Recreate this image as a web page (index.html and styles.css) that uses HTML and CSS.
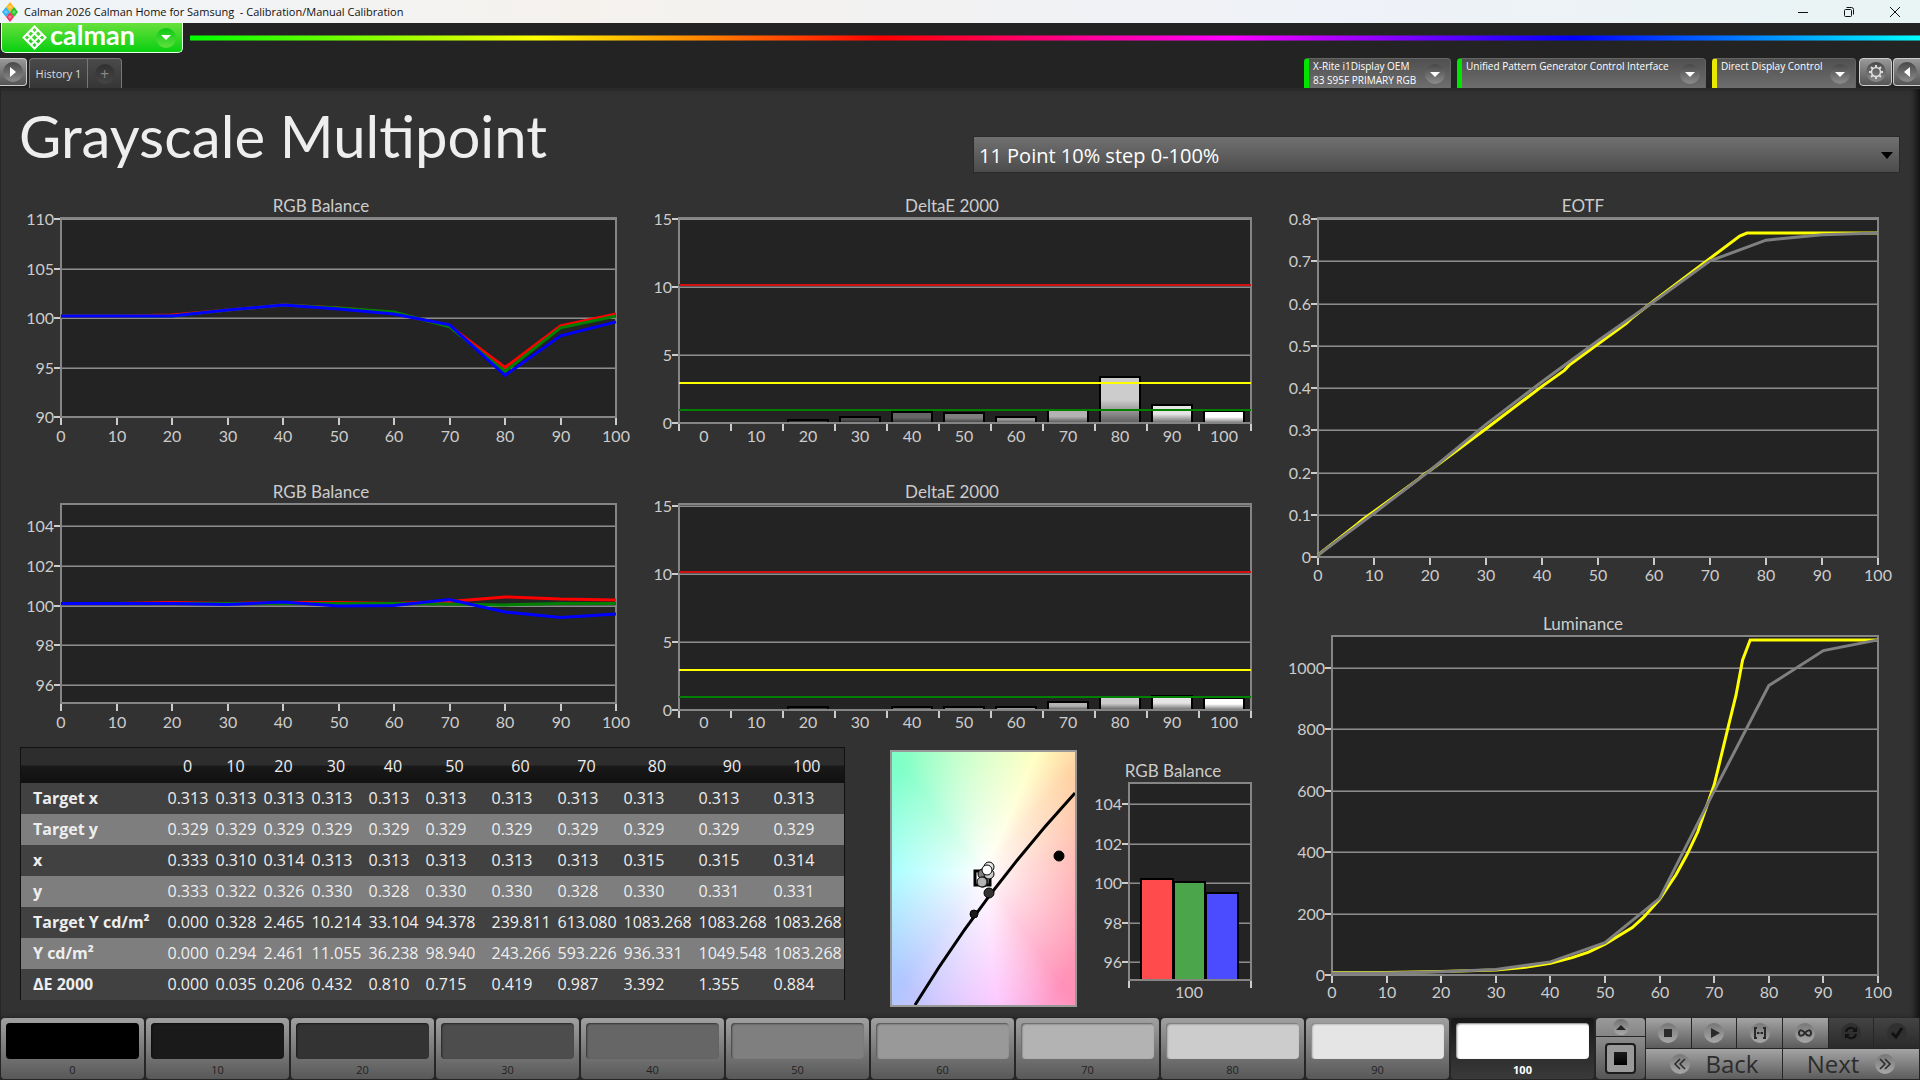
FILE: index.html
```html
<!DOCTYPE html>
<html lang="en">
<head>
  <meta charset="UTF-8">
  <title>Calman 2026 Calman Home for Samsung - Calibration/Manual Calibration</title>
  <link rel="stylesheet" href="styles.css">
</head>
<body>
  <div class="titlebar">
    <svg class="appicon" width="16" height="20" viewBox="0 0 16 20">
      <path d="M8 0l4 5-4 5-4-5z" fill="#ffb81c"/>
      <path d="M4 5l4 5-4 5-4-5z" fill="#2bb3f3"/>
      <path d="M12 5l4 5-4 5-4-5z" fill="#22c322"/>
      <path d="M8 10l4 5-4 5-4-5z" fill="#f5325b"/>
      <path d="M8 3l2 2-2 2-2-2zM4 8l2 2-2 2-2-2zM12 8l2 2-2 2-2-2zM8 13l2 2-2 2-2-2z" fill="#fff" opacity=".35"/>
    </svg>
    <span class="wintitle">Calman 2026 Calman Home for Samsung&nbsp; - Calibration/Manual Calibration</span>
    <div class="winbuttons">
      <button aria-label="Minimize"><svg width="12" height="12" viewBox="0 0 12 12"><path d="M1 6.5h10"/></svg></button>
      <button aria-label="Restore"><svg width="12" height="12" viewBox="0 0 12 12"><rect x="1.5" y="3.5" width="7" height="7" rx="1"/><path d="M3.5 1.5h5a2 2 0 0 1 2 2v5"/></svg></button>
      <button aria-label="Close"><svg width="12" height="12" viewBox="0 0 12 12"><path d="M1 1l10 10M11 1L1 11"/></svg></button>
    </div>
  </div>

  <header>
    <div class="brandrow">
      <button class="brand">
        <svg width="25" height="25" viewBox="0 0 25 25" fill="none" stroke="#fff" stroke-width="2">
          <path d="M12.5 1.500L23.500 12.500 12.500 23.500 1.500 12.500z"/>
          <path d="M9 5l11 11M5 9l11 11M16 5L5 16M20 9L9 20"/>
        </svg>
        <span>calman</span>
        <i class="round green"><i class="down"></i></i>
      </button>
      <div class="spectrum"></div>
    </div>
    <div class="tabrow">
      <button class="square first" aria-label="Expand"><i class="round"><i class="right"></i></i></button>
      <button class="tab">History 1</button>
      <button class="tab add" aria-label="Add tab"><i class="round dark">+</i></button>
      <div class="devices">
        <button class="device"><span>X-Rite i1Display OEM<br>83 S95F PRIMARY RGB</span><i class="round"><i class="down"></i></i></button>
        <button class="device wide"><span>Unified Pattern Generator Control Interface</span><i class="round"><i class="down"></i></i></button>
        <button class="device yellow"><span>Direct Display Control</span><i class="round"><i class="down"></i></i></button>
      </div>
      <button class="square gear" aria-label="Settings"><i class="round">
        <svg width="16" height="16" viewBox="0 0 16 16"><circle cx="8" cy="8" r="4.500" fill="none" stroke="#ddd" stroke-width="1.500"/><path d="M8 1v3M8 12v3M1 8h3M12 8h3M3 3l2 2M11 11l2 2M13 3l-2 2M5 11l-2 2" stroke="#ddd" stroke-width="2"/></svg>
      </i></button>
      <button class="square last" aria-label="Collapse"><i class="round"><i class="left"></i></i></button>
    </div>
  </header>

  <main>
    <div class="heading">
      <h1>Grayscale Multipoint</h1>
      <div class="picker">
        <select aria-label="Points"><option>11 Point 10% step 0-100%</option></select>
      </div>
    </div>

    <div class="content">
      <div class="side">
        <div class="charts">
          <svg id="rgb1" class="chart" viewBox="0 0 620 286"></svg>
          <svg id="de1" class="chart" viewBox="0 0 640 286"></svg>
          <svg id="rgb2" class="chart" viewBox="0 0 620 260"></svg>
          <svg id="de2" class="chart" viewBox="0 0 640 260"></svg>
        </div>
        <div class="lower">
          <table>
            <colgroup>
              <col class="name"><col class="s"><col class="s"><col class="s"><col class="m"><col class="m">
              <col class="l"><col class="l"><col class="l"><col class="xl"><col class="xl"><col class="xl">
            </colgroup>
            <thead>
              <tr><td></td><th>0</th><th>10</th><th>20</th><th>30</th><th>40</th><th>50</th><th>60</th><th>70</th><th>80</th><th>90</th><th>100</th></tr>
            </thead>
            <tbody>
              <tr><th>Target x</th><td>0.313</td><td>0.313</td><td>0.313</td><td>0.313</td><td>0.313</td><td>0.313</td><td>0.313</td><td>0.313</td><td>0.313</td><td>0.313</td><td>0.313</td></tr>
              <tr><th>Target y</th><td>0.329</td><td>0.329</td><td>0.329</td><td>0.329</td><td>0.329</td><td>0.329</td><td>0.329</td><td>0.329</td><td>0.329</td><td>0.329</td><td>0.329</td></tr>
              <tr><th>x</th><td>0.333</td><td>0.310</td><td>0.314</td><td>0.313</td><td>0.313</td><td>0.313</td><td>0.313</td><td>0.313</td><td>0.315</td><td>0.315</td><td>0.314</td></tr>
              <tr><th>y</th><td>0.333</td><td>0.322</td><td>0.326</td><td>0.330</td><td>0.328</td><td>0.330</td><td>0.330</td><td>0.328</td><td>0.330</td><td>0.331</td><td>0.331</td></tr>
              <tr><th>Target Y cd/m²</th><td>0.000</td><td>0.328</td><td>2.465</td><td>10.214</td><td>33.104</td><td>94.378</td><td>239.811</td><td>613.080</td><td>1083.268</td><td>1083.268</td><td>1083.268</td></tr>
              <tr><th>Y cd/m²</th><td>0.000</td><td>0.294</td><td>2.461</td><td>11.055</td><td>36.238</td><td>98.940</td><td>243.266</td><td>593.226</td><td>936.331</td><td>1049.548</td><td>1083.268</td></tr>
              <tr><th>ΔE 2000</th><td>0.000</td><td>0.035</td><td>0.206</td><td>0.432</td><td>0.810</td><td>0.715</td><td>0.419</td><td>0.987</td><td>3.392</td><td>1.355</td><td>0.884</td></tr>
            </tbody>
          </table>
          <div class="cie">
            <svg viewBox="0 0 183 253">
              <path d="M23 253Q92 140 183 41" fill="none" stroke="#000" stroke-width="3"/>
              <rect x="83" y="119" width="15" height="14" fill="#fff" stroke="#000" stroke-width="3"/>
              <g stroke="#000" stroke-width="1">
                <circle cx="167" cy="104" r="5" fill="#000"/>
                <circle cx="82" cy="162" r="4" fill="#1a1a1a"/>
                <circle cx="97" cy="141" r="5" fill="#333"/>
                <circle cx="91" cy="122" r="5" fill="#808080"/>
                <circle cx="91" cy="130" r="5" fill="#999"/>
                <circle cx="90" cy="130" r="5" fill="#b3b3b3"/>
                <circle cx="97" cy="122" r="5" fill="#ccc"/>
                <circle cx="97" cy="115" r="5" fill="#e6e6e6"/>
                <circle cx="95" cy="118" r="5" fill="#fff"/>
              </g>
            </svg>
          </div>
          <svg id="rgb3" class="chart" viewBox="0 0 200 262"></svg>
        </div>
      </div>
      <div class="side">
        <svg id="eotf" class="chart" viewBox="0 0 620 410"></svg>
        <svg id="lum" class="chart" viewBox="0 0 620 404"></svg>
      </div>
    </div>
  </main>

  <footer>
    <div class="swatches" id="swatches"></div>
    <div class="pattern">
      <button class="up" aria-label="More"><i class="round"><i class="upward"></i></i></button>
      <button class="window" aria-label="Pattern window"><span></span></button>
    </div>
    <div class="controls">
      <button aria-label="Stop"><i class="round"><svg viewBox="0 0 20 20"><path d="M6 6h8v8H6z"/></svg></i></button>
      <button aria-label="Play"><i class="round"><svg viewBox="0 0 20 20"><path d="M7 5l9 5-9 5z"/></svg></i></button>
      <button aria-label="Read series"><i class="round"><svg viewBox="0 0 20 20"><path d="M7 5H5v10h2M13 5h2v10h-2" fill="none" stroke="#2a2a2a" stroke-width="2"/><path d="M7 9h2v2H7zM9.500 9h1v2h-1zM11 9h2v2h-2z"/></svg></i></button>
      <button aria-label="Read continuous"><i class="round"><svg viewBox="0 0 20 20"><path d="M10 10C8 7 4 6 4 10s4 3 6 0 6-4 6 0-4 3-6 0z" fill="none" stroke="#2a2a2a" stroke-width="2"/></svg></i></button>
      <button class="off" aria-label="Refresh"><i class="round"><svg viewBox="0 0 20 20"><path d="M5 9a5 5 0 0 1 9-2M15 11a5 5 0 0 1-9 2" fill="none" stroke="#111" stroke-width="2"/><path d="M16 4v5h-5zM4 16v-5h5z"/></svg></i></button>
      <button class="off" aria-label="Accept"><i class="round"><svg viewBox="0 0 20 20"><path d="M5 10l4 4 6-9" fill="none" stroke="#111" stroke-width="3"/></svg></i></button>
      <button class="nav"><i class="round"><svg viewBox="0 0 20 20"><path d="M10 5l-5 5 5 5M15 5l-5 5 5 5" fill="none" stroke="#2a2a2a" stroke-width="1.500"/></svg></i>Back</button>
      <button class="nav">Next<i class="round"><svg viewBox="0 0 20 20"><path d="M5 5l5 5-5 5M10 5l5 5-5 5" fill="none" stroke="#2a2a2a" stroke-width="1.500"/></svg></i></button>
    </div>
  </footer>

  <script src="charts.js"></script>
</body>
</html>
```
FILE: styles.css
```css
* { box-sizing: border-box; }
body { margin: 0; min-height: 100vh; display: flex; flex-direction: column; background: #323232; color: #eee; font-family: "Open Sans", "Noto Sans", sans-serif; }
button { margin: 0; padding: 0; border: 0; background: none; color: inherit; font: inherit; }
svg { display: block; }

/* window frame */
.titlebar { height: 23px; display: flex; align-items: center; padding-left: 2px; background: linear-gradient(90deg, #eff4f9, #f5f2ee 30%, #eff2f8 70%, #e9f4f4); color: #111; }
.wintitle { margin-left: 6px; font-size: 11px; line-height: 20px; }
.winbuttons { margin-left: auto; margin-right: 2px; display: flex; }
.winbuttons button { width: 46px; height: 20px; display: flex; align-items: center; justify-content: center; }
.winbuttons svg { fill: none; stroke: #111; }

/* top bar */
header { background: #232323; height: 66px; border-bottom: 1px solid #2b2b2b; }
.brandrow { display: flex; height: 35px; }
.brand { width: 182px; height: 30px; margin-left: 1px; display: flex; align-items: center; padding: 0 6px 0 20px; border: 1px solid #e8ffe8; border-top: 0; border-radius: 0 0 5px 5px; background: linear-gradient(#68e03c, #08cf10); color: #fff; }
.brand span { margin-left: 3px; font: bold 27px/24px Lato, sans-serif; padding-bottom: 6px; }
.spectrum { flex: 1; height: 6px; margin: 12px 0 0 7px; background: linear-gradient(90deg, #0f0, #ff0, #f00, #f0f, #00f, #0ff); border: solid rgba(40, 40, 40, .5); border-width: 1px 0; }
.tabrow { display: flex; height: 30px; }
.square { width: 33px; height: 28px; display: flex; align-items: center; justify-content: center; border: 1px solid #ccc; border-radius: 4px; background: linear-gradient(#999, #555); }
.square.first { width: 27px; border-left: 0; border-radius: 0 4px 4px 0; margin-right: 2px; }
.square.last { width: 27px; border-right: 0; border-radius: 4px 0 0 4px; margin-left: 1px; }
.tab { width: 59px; border: 1px solid #777; border-bottom: 0; border-radius: 4px 0 0 0; background: linear-gradient(#4a4a4a, #363636); color: #ddd; font-size: 11px; }
.tab.add { width: 34px; border-left: 0; border-radius: 0 4px 0 0; display: flex; align-items: center; justify-content: center; }
.round { width: 20px; height: 20px; flex: none; border-radius: 50%; display: flex; align-items: center; justify-content: center; background: linear-gradient(#484848, #8c8c8c); font-style: normal; }
.round.green { margin-left: auto; background: linear-gradient(#0ac814, #60e040); }
.round.dark { background: linear-gradient(#303030, #454545); color: #888; font-size: 16px; }
.down, .upward { border: 5px solid transparent; border-top: 5px solid #fff; border-bottom: 0; }
.upward { border-top: 0; border-bottom: 5px solid #222; }
.right, .left { border: 5px solid transparent; border-left: 6px solid #fff; border-right: 0; }
.left { border-left: 0; border-right: 6px solid #fff; }
.devices { margin-left: auto; display: flex; gap: 6px; }
.device { width: 147px; display: flex; padding: 0 5px 0 4px; border: 1px solid #666; border-left: 5px solid #00e400; border-bottom: 0; border-radius: 4px 4px 0 0; background: linear-gradient(#505050, #6e6e6e); color: #fff; font-size: 10px; line-height: 14px; text-align: left; }
.device.wide { width: 249px; }
.device.yellow { width: 144px; border-left-color: #e8e800; }
.device .round { margin: 5px 0 0 auto; }
.gear { margin-left: 3px; }

/* page */
main { flex: 1; padding: 0 20px; border-left: 1px solid #262626; box-shadow: inset -6px 0 6px -2px #111; }
.heading { display: flex; justify-content: space-between; height: 107px; margin-left: -2px; }
h1 { margin: 13px 0 0; font: 58px/68px Lato, sans-serif; }
.picker { position: relative; width: 50%; max-width: 927px; height: 37px; margin-top: 47px; }
.picker select { width: 100%; height: 100%; appearance: none; padding: 2px 5px 0; border: 1px solid #2a2a2a; border-radius: 0; background: linear-gradient(#707070, #4c4c4c); color: #fff; font: 20px "Open Sans", sans-serif; }
.picker::after { content: ""; position: absolute; right: 7px; top: 16px; border: 6px solid transparent; border-top: 7px solid #000; border-bottom: 0; pointer-events: none; }
.content { display: grid; grid-template-columns: 1260fr 620fr; margin-left: -1px; }
.charts { display: grid; grid-template-columns: 620fr 640fr; }
.chart { width: 100%; overflow: visible; font: 16px Lato, sans-serif; fill: #ccc; }
.chart .name { font-size: 17px; }
.lower { display: grid; grid-template-columns: 870fr 190fr 200fr; margin-top: 5px; align-items: start; }
.cie { margin: 3px 3px 0 0; border: 2px solid #999;
  background: radial-gradient(ellipse at 50% 48%, #fff 0, rgba(255, 255, 255, .6) 35%, rgba(255, 255, 255, .1) 85%),
    conic-gradient(at 50% 48%, #ccffb4, #ffffb4 24deg, #ffd09a 40deg, #ffa8a0 80deg, #ff84b0 145deg, #fcb8ff 174deg, #a8c0ff 217deg, #90ffff 272deg, #70ffc0 323deg, #ccffb4); }
.cie svg { width: 100%; }

table { table-layout: fixed; border-collapse: collapse; margin-right: 45px; border: 1px solid #111; border-bottom: 0; font-size: 16px; }
col.name { width: 143px; }
col.s { width: 48px; }
col.m { width: 57px; }
col.l { width: 66px; }
col.xl { width: 75px; }
th, td { padding: 0 0 0 4px; height: 31px; line-height: 31px; text-align: left; white-space: nowrap; }
thead tr { background: linear-gradient(#2d2d2d 48%, #191919 52%, #101010); }
thead th, thead td { height: 35px; padding: 2px 0 0; text-align: center; font-weight: normal; }
tbody th { padding-left: 12px; font-size: 16px; }
tbody tr { background: #414141; }
tbody tr:nth-child(even) { background: #7e7e7e; }

/* bottom bar */
footer { display: flex; height: 62px; padding: 0 1px; background: #262626; }
.swatches { flex: 1; display: flex; gap: 2px; }
.swatch { flex: 1; height: 61px; padding: 5px; border-radius: 4px; background: linear-gradient(#a0a0a0, #585858); color: #222; font-size: 11px; line-height: 22px; text-align: center; }
.swatch i { display: block; height: 36px; border-radius: 4px; box-shadow: inset 1px 1px 2px rgba(0, 0, 0, .5); }
.swatch.active { background: linear-gradient(#181818, #3a3a3a); color: #fff; font-weight: bold; }
.pattern { width: 49px; margin: 0 1px 0 2px; display: flex; flex-direction: column; gap: 1px; }
.pattern button { display: flex; align-items: center; justify-content: center; background: linear-gradient(#9a9a9a, #858585); border-radius: 4px 4px 0 0; }
.pattern .up { height: 18px; }
.pattern .round { width: 16px; height: 16px; background: linear-gradient(#707070, #aaa); }
.pattern .window { height: 42px; border-radius: 0 0 4px 4px; background: linear-gradient(#8c8c8c, #555); }
.window span { width: 31px; height: 31px; border: 2px solid #1c1c1c; border-radius: 4px; padding: 7px; background: linear-gradient(#1c1c1c, #000) content-box, #999; }
.controls { width: 273px; display: grid; grid-template-columns: repeat(6, 1fr); grid-template-rows: 30px 30px; gap: 1px; }
.controls button { display: flex; align-items: center; justify-content: center; background: linear-gradient(#a4a4a4, #5c5c5c); color: #2c2c2c; }
.controls .off { background: linear-gradient(#444, #2a2a2a); }
.controls .round { background: linear-gradient(#777, #a8a8a8); }
.controls .off .round { background: #303030; }
.controls svg { width: 20px; fill: #2a2a2a; }
.controls .off svg { fill: #111; }
.controls .nav { grid-column: span 3; gap: 16px; font-size: 24px; line-height: 28px; }
```
FILE: charts.js
```js
const tens = [0, 10, 20, 30, 40, 50, 60, 70, 80, 90, 100];
const greys = tens.map(t => Math.round(t * 2.55));

function rect(x, y, w, h, fill) {
  return `<rect x="${x}" y="${y}" width="${w}" height="${h}" fill="${fill}"/>`;
}

function text(x, y, anchor, s) {
  return `<text x="${x}" y="${y}" text-anchor="${anchor}">${s}</text>`;
}

// o: box [left, top, right, bottom], title [x, y, text], y axis as
// [value, pixel] pairs, labelY = baseline of the x labels
function chart(id, o) {
  const [l, t, r, b] = o.box;
  const [[v0, p0], [v1, p1]] = o.scale;
  const py = v => p0 + (v - v0) * (p1 - p0) / (v1 - v0);
  const px = v => l + v * (r - l) / 100;
  let s = rect(l, t, r - l, b - t, "#232323");

  o.grid.forEach(v => {
    const y = Math.round(py(v));
    s += rect(l, y - 1, r - l, 1, "#5c5c5c") + rect(l, y, r - l, 1, "#8c8c8c");
    s += rect(l - 7, y - 1, 7, 2, "#ccc") + text(l - 7, y + 6, "end", v);
  });

  const labels = o.labels || tens;
  const slot = (r - l) / labels.length;
  labels.forEach((v, i) => {
    const x = o.bars ? l + slot * (i + .5) - 1 : px(v);
    s += text(Math.round(x), o.labelY, "middle", v);
    if (!o.bars) s += rect(Math.round(x) - 1, b, 2, 8, "#ccc");
  });
  if (o.bars) {
    for (let i = 0; i <= labels.length; i++) s += rect(Math.round(l + slot * i) - 1, b, 2, 8, "#ccc");
  }

  (o.barList || []).forEach(k => {
    const y = Math.round(py(k.v));
    if (b - y > 1) s += `<rect x="${k.x}" y="${y}" width="${k.w}" height="${b - y}" fill="${k.fill}" stroke="#000" stroke-width="2"/>`;
  });
  s += `<rect x="${l}" y="${t}" width="${r - l}" height="${b - t}" fill="none" stroke="#858585" stroke-width="2"/>`;
  (o.limits || []).forEach(([v, c]) => s += rect(l, Math.round(py(v)), r - l, 2, c));
  s = `<g shape-rendering="crispEdges">${s}</g>`;

  // the plotted lines sit 2px above the grid
  (o.lines || []).forEach(([c, pts]) => {
    const d = pts.map(([x, y]) => px(x).toFixed(1) + "," + (py(y) - 2).toFixed(1)).join(" ");
    s += `<polyline points="${d}" fill="none" stroke="${c}" stroke-width="3"/>`;
  });
  s += `<text class="name" x="${o.title[0]}" y="${o.title[1]}" text-anchor="middle">${o.title[2]}</text>`;
  document.getElementById(id).innerHTML = s;
}

const zip = ys => ys.map((y, i) => [i * 10, y]);

// grey ramps for the deltaE bars
const defs = greys.map((g, i) => {
  const lo = Math.round(g * .45);
  return `<linearGradient id="g${i}" x1="0" y1="0" x2="0" y2="1"><stop offset="0" stop-color="rgb(${g},${g},${g})"/><stop offset=".5" stop-color="rgb(${g},${g},${g})"/><stop offset="1" stop-color="rgb(${lo},${lo},${lo})"/></linearGradient>`;
}).join("");
document.body.insertAdjacentHTML("beforeend", `<svg width="0" height="0" style="position:absolute"><defs>${defs}</defs></svg>`);

function deltaBars(values) {
  return values.map((v, i) => ({ v, x: 44 + i * 52, w: 40, fill: `url(#g${i})` })).filter(k => k.v > .1);
}
const limits = [[10.2, "#d01010"], [3, "#ff0"], [1, "#008000"]];

chart("rgb1", {
  box: [41, 22, 596, 221], title: [301, 16, "RGB Balance"], labelY: 246,
  scale: [[90, 221], [110, 23]], grid: [90, 95, 100, 105, 110],
  lines: [
    ["#f00", zip([100, 100, 100.1, 100.6, 101.1, 100.8, 100.3, 99, 94.800, 99, 100.2])],
    ["#008000", zip([100, 100, 100, 100.6, 101.1, 100.8, 100.4, 98.900, 94.400, 98.800, 100])],
    ["#00f", zip([100, 100, 100, 100.6, 101.1, 100.7, 100.2, 99.100, 94, 98, 99.400])]
  ]
});
chart("rgb2", {
  box: [41, 22, 596, 221], title: [301, 16, "RGB Balance"], labelY: 246,
  scale: [[96, 203], [104, 44]], grid: [96, 98, 100, 102, 104],
  lines: [
    ["#f00", zip([100, 100, 100.05, 100, 100.05, 100.05, 100, 100.1, 100.33, 100.22, 100.18])],
    ["#008000", zip([100, 100, 100, 100, 100, 100, 100, 99.980, 99.930, 100, 100])],
    ["#00f", zip([100, 100, 100, 99.950, 100.08, 99.880, 99.900, 100.2, 99.570, 99.300, 99.470])]
  ]
});
chart("de1", {
  box: [39, 22, 611, 227], title: [312, 16, "DeltaE 2000"], labelY: 246, bars: true,
  scale: [[0, 227], [15, 23]], grid: [0, 5, 10, 15], limits,
  barList: deltaBars([0, .035, .206, .432, .81, .715, .419, .987, 3.392, 1.355, .884])
});
chart("de2", {
  box: [39, 22, 611, 228], title: [312, 16, "DeltaE 2000"], labelY: 246, bars: true,
  scale: [[0, 228], [15, 24]], grid: [0, 5, 10, 15], limits,
  barList: deltaBars([0, 0, .2, .05, .2, .2, .2, .6, .95, 1.05, .85])
});
chart("rgb3", {
  box: [49, 36, 171, 233], title: [93, 30, "RGB Balance"], labelY: 251, bars: true, labels: [100],
  scale: [[96, 215], [104, 57]], grid: [96, 98, 100, 102, 104],
  barList: [
    { v: 100.2, x: 61, w: 32, fill: "#ff4b4b" },
    { v: 100.05, x: 94, w: 31, fill: "#4ba54b" },
    { v: 99.5, x: 126, w: 32, fill: "#4b4bff" }
  ]
});
chart("eotf", {
  box: [38, 22, 598, 361], title: [303, 16, "EOTF"], labelY: 385,
  scale: [[0, 361], [.8, 23]], grid: [0, .1, .2, .3, .4, .5, .6, .7, .8],
  lines: [
    ["#ff0", [[0, 0], [7, .073], [8, .084], [10, .103], [18, .18], [19, .192], [20, .2], [30, .299], [40, .399], [44, .437], [45, .451], [55, .548], [56, .56], [60, .602], [70, .702], [75.300, .755], [76.600, .762], [100, .762]]],
    ["#808080", zip([0, .099, .2, .309, .41, .507, .6, .696, .745, .758, .762])]
  ]
});
chart("lum", {
  box: [52, 30, 598, 369], title: [303, 24, "Luminance"], labelY: 392,
  scale: [[0, 369], [1000, 62]], grid: [0, 200, 400, 600, 800, 1000],
  lines: [
    ["#ff0", [[0, 2], [10, 2], [20, 5], [30, 10], [35, 18], [40, 32], [44, 50], [47, 68], [50, 94], [55, 148], [57, 180], [60, 240], [63, 320], [65, 385], [67, 460], [70, 613], [72.600, 804], [74, 905], [75.200, 1020], [76.600, 1085], [100, 1085]]],
    ["#808080", zip([0, .3, 4, 11, 36, 99, 243, 593, 936, 1050, 1085])]
  ]
});

document.getElementById("swatches").innerHTML = tens.map((t, i) =>
  `<button class="swatch${t == 100 ? " active" : ""}"><i style="background:rgb(${greys[i]},${greys[i]},${greys[i]})"></i>${t}</button>`
).join("");
```
